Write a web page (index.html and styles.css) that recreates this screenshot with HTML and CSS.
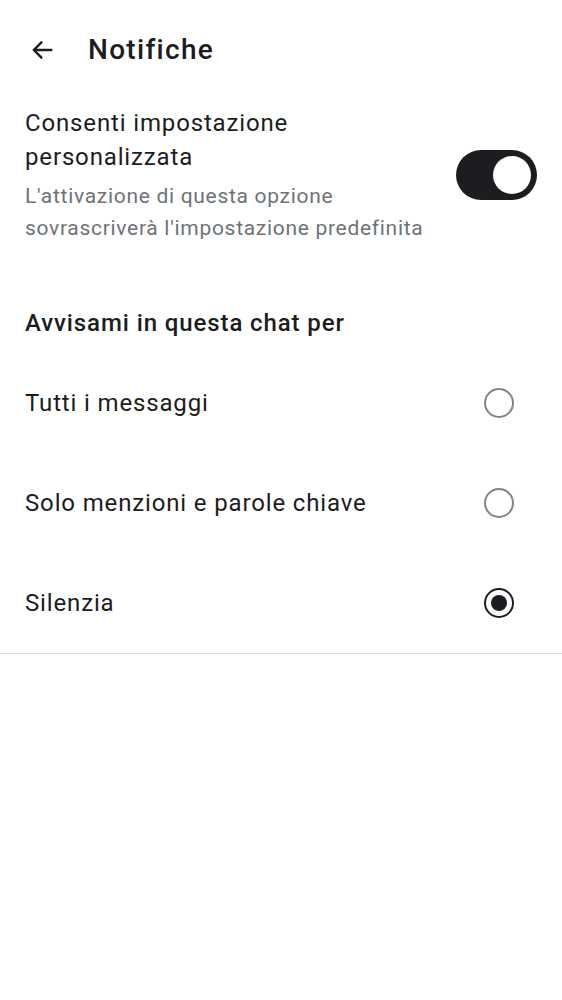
FILE: index.html
```html
<!DOCTYPE html>
<html lang="it">
<head>
<meta charset="utf-8">
<link rel="stylesheet" href="styles.css">
</head>
<body>
<header class="topbar">
  <svg class="back" width="28" height="28" viewBox="0 0 24 24"><path d="M20 12H5M11.5 5.5L5 12l6.5 6.5" fill="none" stroke="#1c1d21" stroke-width="2.1" stroke-linecap="round" stroke-linejoin="round"/></svg>
  <h1 class="title">Notifiche</h1>
</header>
<section class="custom">
  <div class="custom-text">
    <div class="custom-title">Consenti impostazione personalizzata</div>
    <div class="custom-desc">L'attivazione di questa opzione sovrascriverà l'impostazione predefinita</div>
  </div>
  <div class="toggle"><div class="knob"></div></div>
</section>
<h2 class="section-title">Avvisami in questa chat per</h2>
<ul class="options">
  <li class="option"><span>Tutti i messaggi</span><span class="radio"></span></li>
  <li class="option"><span>Solo menzioni e parole chiave</span><span class="radio"></span></li>
  <li class="option"><span>Silenzia</span><span class="radio checked"></span></li>
</ul>
</body>
</html>
```
FILE: styles.css
```css
html, body { margin: 0; padding: 0; background: #fff; }
body { font-family: Roboto, "Noto Sans", sans-serif; color: #1c1d21; width: 562px; }
.topbar { display: flex; align-items: center; height: 100px; padding-left: 28px; box-sizing: border-box; }
.back { display: block; }
.title { margin: 0 0 0 32px; font-size: 28px; font-weight: 500; line-height: 1; letter-spacing: 1.3px; }
.custom { display: flex; align-items: center; padding: 0 25px; margin-top: 6px; }
.custom-text { flex: 1; min-width: 0; padding-right: 25px; }
.custom-title { font-size: 24px; line-height: 34px; letter-spacing: 0.85px; }
.custom-desc { font-size: 21px; line-height: 32px; color: #6e7278; margin-top: 6px; letter-spacing: 0.7px; }
.toggle { width: 81px; height: 50px; border-radius: 25px; background: #1c1d21; position: relative; flex: none; }
.knob { position: absolute; width: 38px; height: 38px; border-radius: 50%; background: #fff; right: 6px; top: 6px; }
.section-title { margin: 62px 0 0; padding: 0 25px; font-size: 24px; font-weight: 500; line-height: 34px; letter-spacing: 0.9px; }
.options { list-style: none; margin: 13px 0 0; padding: 0; border-bottom: 1px solid #dcdcdc; }
.option { display: flex; align-items: center; justify-content: space-between; height: 100px; padding: 0 48px 0 25px; font-size: 24px; letter-spacing: 0.85px; }
.radio { width: 26px; height: 26px; border-radius: 50%; border: 2.5px solid #7e848b; box-sizing: content-box; position: relative; }
.radio.checked { border-color: #1c1d21; }
.radio.checked::after { content: ""; position: absolute; left: 5px; top: 5px; width: 16px; height: 16px; border-radius: 50%; background: #1c1d21; }
```
